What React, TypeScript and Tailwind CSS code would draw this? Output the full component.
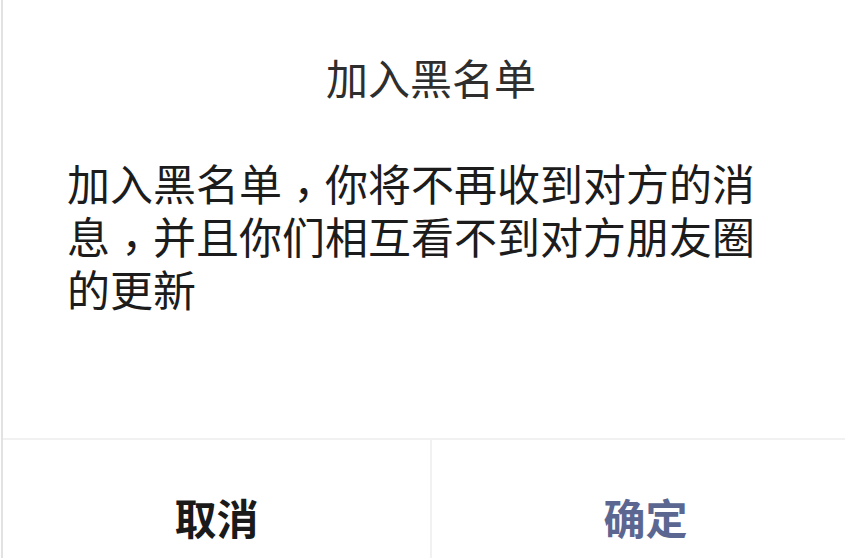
import * as React from 'react';

const cjk = { fontFamily: '"Noto Sans CJK SC", "Noto Sans", sans-serif' };

// full-width comma centred in its cell (TC form), nudged down to sit low
function Comma() {
  return (
    <span
      className="mb-[-10px] inline-block pt-[10px] align-top leading-[53px]"
      style={{ fontFamily: '"Noto Sans CJK TC", sans-serif' }}
    >
      ，
    </span>
  );
}

export default function App() {
  return (
    <div className="h-[558px] w-[845px] overflow-hidden bg-white" style={cjk}>
      <div className="ml-[1px] w-[858px] border-l-2 border-[#e2e2e2] bg-white">
        {/* Title and message */}
        <div className="flex h-[440px] flex-col border-b-2 border-[#f1f1f1]">
          <h2 className="pt-[50px] text-center text-[42px] leading-[53px] font-normal text-[#2e2e2e]">
            加入黑名单
          </h2>
          <p className="mt-[53px] pl-[64px] pr-[84px] text-[43px] leading-[53px] text-[#1c1c1c]">
            加入黑名单<Comma />你将不再收到对方的消息<Comma />并且你们相互看不到对方朋友圈的更新
          </p>
        </div>

        {/* Action buttons */}
        <div className="flex h-[154px]">
          <button className="flex flex-1 items-center justify-center border-r-2 border-[#f1f1f1] pb-[2px] text-[42px] font-bold text-[#1a1a1a]">
            取消
          </button>
          <button className="flex flex-1 items-center justify-center pb-[2px] text-[42px] font-bold text-[#5b6791]">
            确定
          </button>
        </div>
      </div>
    </div>
  );
}
